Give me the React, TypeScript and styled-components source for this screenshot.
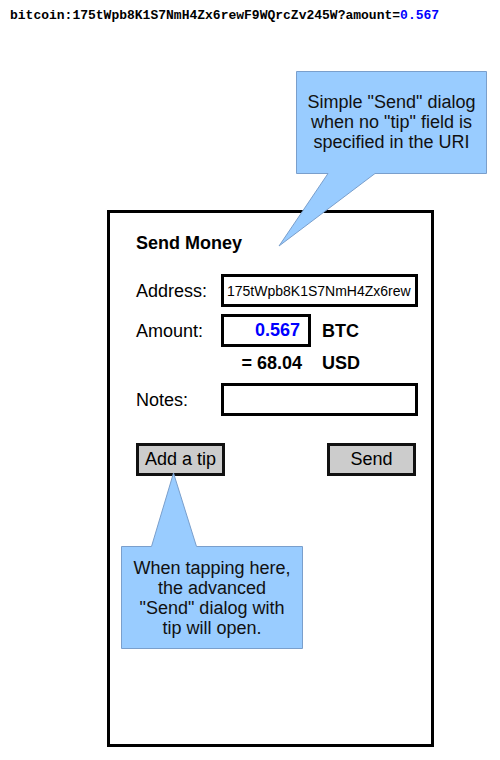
import React from "react";
import styled, { createGlobalStyle } from "styled-components";

const Global = createGlobalStyle`
  html, body { margin: 0; padding: 0; background: #fff; }
  body { font-family: "Liberation Sans", Arial, sans-serif; color: #000; }
`;

const Page = styled.div`
  position: relative;
  width: 500px;
  height: 760px;
  overflow: hidden;
  display: flex;
  flex-direction: column;
`;

const UriLine = styled.div`
  padding: 6px 0 0 10px;
  height: 20px;
  line-height: 20px;
  font-family: "Liberation Mono", "Courier New", monospace;
  font-weight: bold;
  font-size: 13px;
  white-space: nowrap;
`;

const Blue = styled.span`
  color: #0000ff;
`;

const Phone = styled.div`
  box-sizing: border-box;
  margin: 184px 0 0 107px;
  width: 327px;
  height: 537px;
  border: 3px solid #000;
  padding: 20px 13px 0 26px;
  display: flex;
  flex-direction: column;
`;

const Title = styled.div`
  font-size: 18px;
  font-weight: bold;
  line-height: 20px;
  height: 20px;
`;

const Row = styled.div<{ $mt: number }>`
  display: flex;
  align-items: center;
  margin-top: ${(p) => p.$mt}px;
`;

const Label = styled.div`
  width: 85px;
  font-size: 18px;
  line-height: 20px;
`;

const Field = styled.div<{ $w: number; $align?: string }>`
  box-sizing: border-box;
  width: ${(p) => p.$w}px;
  height: 33px;
  border: 3px solid #000;
  display: flex;
  align-items: center;
  justify-content: ${(p) => p.$align || "flex-start"};
  padding: 0 8px 0 3px;
  font-size: 14px;
  white-space: nowrap;
  overflow: hidden;
`;

const AmountValue = styled.span`
  color: #0000ff;
  font-weight: bold;
  font-size: 18px;
`;

const Unit = styled.div`
  margin-left: 11px;
  font-weight: bold;
  font-size: 18px;
  line-height: 20px;
`;

const Converted = styled.div`
  margin-left: 85px;
  width: 90px;
  box-sizing: border-box;
  padding-right: 9px;
  text-align: right;
  font-weight: bold;
  font-size: 18px;
  line-height: 20px;
`;

const ButtonRow = styled.div`
  display: flex;
  justify-content: space-between;
  width: 280px;
  margin-top: 27px;
`;

const Button = styled.div`
  box-sizing: border-box;
  width: 89px;
  height: 33px;
  border: 3px solid #111;
  background: #cccccc;
  display: flex;
  align-items: center;
  justify-content: center;
  font-size: 18px;
`;

const Callout = styled.div<{ $left: number; $top: number; $w: number; $h: number }>`
  position: absolute;
  left: ${(p) => p.$left}px;
  top: ${(p) => p.$top}px;
  width: ${(p) => p.$w}px;
  height: ${(p) => p.$h}px;
`;

const CalloutShape = styled.svg`
  position: absolute;
  inset: 0;
  overflow: visible;
`;

const CalloutText = styled.div<{ $left: number; $top: number; $w: number; $h: number }>`
  position: absolute;
  left: ${(p) => p.$left}px;
  top: ${(p) => p.$top}px;
  width: ${(p) => p.$w}px;
  height: ${(p) => p.$h}px;
  display: flex;
  align-items: center;
  justify-content: center;
  text-align: center;
  font-size: 18px;
  line-height: 20px;
  color: #111;
`;

export default function App() {
  return (
    <Page>
      <Global />
      <UriLine>
        bitcoin:175tWpb8K1S7NmH4Zx6rewF9WQrcZv245W?amount=<Blue>0.567</Blue>
      </UriLine>
      <Phone>
        <Title>Send Money</Title>
        <Row $mt={21}>
          <Label>Address:</Label>
          <Field $w={197}>175tWpb8K1S7NmH4Zx6rew</Field>
        </Row>
        <Row $mt={7}>
          <Label>Amount:</Label>
          <Field $w={90} $align="flex-end">
            <AmountValue>0.567</AmountValue>
          </Field>
          <Unit>BTC</Unit>
        </Row>
        <Row $mt={6}>
          <Converted>= 68.04</Converted>
          <Unit>USD</Unit>
        </Row>
        <Row $mt={10}>
          <Label>Notes:</Label>
          <Field $w={197} />
        </Row>
        <ButtonRow>
          <Button>Add a tip</Button>
          <Button>Send</Button>
        </ButtonRow>
      </Phone>

      <Callout $left={279} $top={71} $w={208} $h={175}>
        <CalloutShape width="208" height="175" viewBox="0 0 208 175">
          <path
            d="M17.5 0.5 H207.5 V102.5 H96 L0 175 L49 102.5 H17.5 Z"
            fill="#99ccff"
            stroke="#7a9fcc"
            strokeWidth="1"
          />
        </CalloutShape>
        <CalloutText $left={17} $top={0} $w={191} $h={102}>
          Simple "Send" dialog
          <br />
          when no "tip" field is
          <br />
          specified in the URI
        </CalloutText>
      </Callout>

      <Callout $left={121} $top={473} $w={182} $h={176}>
        <CalloutShape width="182" height="176" viewBox="0 0 182 176">
          <path
            d="M0.5 73.5 H30.5 L52.5 0 L75.5 73.5 H181.5 V175.5 H0.5 Z"
            fill="#99ccff"
            stroke="#7a9fcc"
            strokeWidth="1"
          />
        </CalloutShape>
        <CalloutText $left={0} $top={73} $w={182} $h={103}>
          When tapping here,
          <br />
          the advanced
          <br />
          "Send" dialog with
          <br />
          tip will open.
        </CalloutText>
      </Callout>
    </Page>
  );
}
